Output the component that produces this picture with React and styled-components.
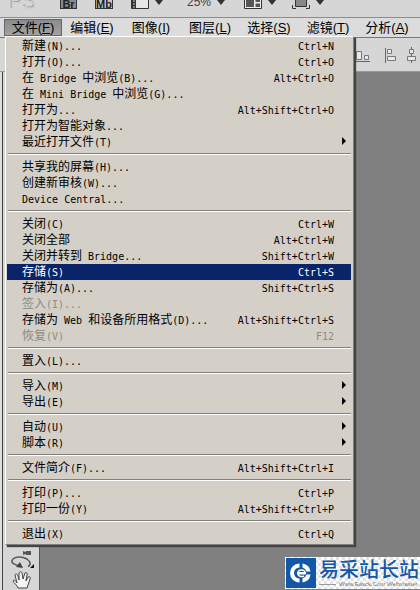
import { Fragment } from 'react';
import styled, { createGlobalStyle } from 'styled-components';

const GlobalStyle = createGlobalStyle`
  * {
    box-sizing: border-box;
  }
  body {
    margin: 0;
    background: #808080;
    font-family: 'Liberation Sans', 'Noto Sans CJK SC', sans-serif;
    color: #000;
  }
  button {
    border: 0;
    padding: 0;
    background: none;
    color: inherit;
    font: inherit;
  }
`;

const menuBar = [
  ['文件', 'F'],
  ['编辑', 'E'],
  ['图像', 'I'],
  ['图层', 'L'],
  ['选择', 'S'],
  ['滤镜', 'T'],
  ['分析', 'A'],
];

const fileMenu = [
  [
    { label: '新建(N)...', keys: 'Ctrl+N' },
    { label: '打开(O)...', keys: 'Ctrl+O' },
    { label: '在 Bridge 中浏览(B)...', keys: 'Alt+Ctrl+O' },
    { label: '在 Mini Bridge 中浏览(G)...' },
    { label: '打开为...', keys: 'Alt+Shift+Ctrl+O' },
    { label: '打开为智能对象...' },
    { label: '最近打开文件(T)', sub: true },
  ],
  [
    { label: '共享我的屏幕(H)...' },
    { label: '创建新审核(W)...' },
    { label: 'Device Central...' },
  ],
  [
    { label: '关闭(C)', keys: 'Ctrl+W' },
    { label: '关闭全部', keys: 'Alt+Ctrl+W' },
    { label: '关闭并转到 Bridge...', keys: 'Shift+Ctrl+W' },
    { label: '存储(S)', keys: 'Ctrl+S', active: true },
    { label: '存储为(A)...', keys: 'Shift+Ctrl+S' },
    { label: '签入(I)...', disabled: true },
    { label: '存储为 Web 和设备所用格式(D)...', keys: 'Alt+Shift+Ctrl+S' },
    { label: '恢复(V)', keys: 'F12', disabled: true },
  ],
  [{ label: '置入(L)...' }],
  [
    { label: '导入(M)', sub: true },
    { label: '导出(E)', sub: true },
  ],
  [
    { label: '自动(U)', sub: true },
    { label: '脚本(R)', sub: true },
  ],
  [{ label: '文件简介(F)...', keys: 'Alt+Shift+Ctrl+I' }],
  [
    { label: '打印(P)...', keys: 'Ctrl+P' },
    { label: '打印一份(Y)', keys: 'Alt+Shift+Ctrl+P' },
  ],
  [{ label: '退出(X)', keys: 'Ctrl+Q' }],
];

const Window = styled.div`
  position: relative;
  display: flex;
  flex-direction: column;
  min-height: 100vh;
  overflow: hidden;
  background: #808080;
`;

const AppBar = styled.header`
  display: flex;
  align-items: flex-start;
  height: 18px;
  padding-left: 10px;
  overflow: hidden;
  background: #d6d6d6;
  border-bottom: 1px solid #8c8c8c;
`;

const Logo = styled.div`
  width: 50px;
  font-size: 20px;
  line-height: 4px;
  color: #d0d0d0;
  text-shadow: -1px -1px 0 #a0a0a0;
`;

const AppButton = styled.button`
  width: ${(props) => (props.$dark ? 17 : 18)}px;
  height: 9px;
  margin-right: 18px;
  border: 1px solid #333;
  border-top: 0;
  background: ${(props) => (props.$dark ? '#8a8a8a' : '#c8c8c8')};
  font-size: 11px;
  font-weight: 700;
  line-height: 4px;
  color: #222;
`;

const ToolButton = styled.button`
  display: flex;
  align-items: flex-start;
  gap: 6px;
  margin-right: 16px;
`;

const Zoom = styled(ToolButton)`
  margin: 0 19px 0 8px;
  font-size: 12px;
  line-height: 4px;
  color: #444;
`;

const MenuBar = styled.nav`
  display: flex;
  gap: 1px;
  height: 19px;
  padding: 1px 0 1px 4px;
  background: #dcdcdc;
  white-space: nowrap;
`;

const MenuTitle = styled.button`
  display: flex;
  flex: none;
  justify-content: center;
  width: 58px;
  border: 1px solid ${(props) => (props.$open ? '#666' : 'transparent')};
  background: ${(props) => (props.$open ? 'linear-gradient(#8b8b8b, #a2a2a2)' : 'none')};
  font-size: 13px;
  line-height: 16px;
`;

const OptionsBar = styled.div`
  display: flex;
  align-items: center;
  justify-content: flex-end;
  gap: 15px;
  height: 35px;
  padding-right: 3px;
  background: #d6d6d6;
  border-top: 1px solid #777;
  border-bottom: 1px solid #999;
`;

const AlignGroup = styled.div`
  display: flex;
  gap: 9px;
`;

const Workspace = styled.main`
  display: flex;
  flex: 1;
`;

const WindowEdge = styled.div`
  width: 3px;
  background: #dedede;
  border-right: 1px solid #444;
`;

const ToolPanel = styled.aside`
  display: flex;
  flex-direction: column;
  justify-content: flex-end;
  gap: 1px;
  width: 37px;
  padding: 0 0 1px 8px;
  background: #d6d6d6;
  border-right: 1px solid #555;
`;

const Menu = styled.div`
  position: absolute;
  top: 36px;
  left: 5px;
  width: 349px;
  padding: 1px 2px 2px 1px;
  border: 1px solid;
  border-color: #fff #808080 #808080 #fff;
  background: #d4d0c8;
  box-shadow: 2px 2px 1px #444;
`;

const Separator = styled.hr`
  height: 2px;
  margin: 3px 0 4px 1px;
  border: 0;
  border-top: 1px solid #808080;
  border-bottom: 1px solid #fff;
`;

const MenuRow = styled.button`
  display: flex;
  align-items: baseline;
  width: 100%;
  height: 16px;
  padding: 0 4px 2px 15px;
  background: ${(props) => (props.$active ? '#0a246a' : 'none')};
  color: ${(props) => (props.$active ? '#fff' : '#000')};
  font-family: 'Noto Sans CJK SC', sans-serif;
  font-size: 12px;
  line-height: 14px;
  white-space: pre;

  &:disabled {
    color: #8d8a84;
  }
`;

const Latin = styled.span`
  font-family: 'DejaVu Sans Mono', monospace;
  font-size: 10px;
  line-height: 10px;
`;

const Keys = styled(Latin)`
  margin-left: auto;
  padding-right: 13px;
`;

const Arrow = styled.svg`
  align-self: center;
  margin-left: auto;
`;

const Watermark = styled.a`
  position: absolute;
  right: 0;
  bottom: 1px;
  display: flex;
  align-items: center;
  gap: 3px;
  width: 135px;
  height: 32px;
  padding-left: 1px;
  overflow: hidden;
  background: repeating-conic-gradient(#e4e4e4 0 25%, #fff 0 50%) 0 0 / 6px 6px;
  color: #1358a8;
  text-decoration: none;
`;

const WatermarkText = styled.div`
  display: flex;
  flex-direction: column;
  white-space: nowrap;
`;

const WatermarkName = styled.div`
  font-family: 'Noto Sans CJK SC', sans-serif;
  font-size: 20px;
  font-weight: 500;
  line-height: 22px;
`;

const WatermarkUrl = styled.div`
  display: flex;
  align-items: center;
  gap: 3px;
  font-size: 6px;
  line-height: 8px;
  color: #777;

  &::before {
    content: '';
    width: 17px;
    height: 1px;
    background: #999;
  }
`;

// Latin runs are set in a half-width face so that two letters fill one han cell
function MenuText({ text }) {
  return (
    <span>
      {text.split(/([\x20-\x7e]+)/).map((part, i) =>
        i % 2 ? <Latin key={i}>{part}</Latin> : <Fragment key={i}>{part}</Fragment>
      )}
    </span>
  );
}

function Caret() {
  return (
    <svg width="8" height="5" viewBox="0 0 8 5" aria-hidden="true">
      <path d="M0 0h8L4 5z" fill="#333" />
    </svg>
  );
}

function LayoutIcon() {
  return (
    <svg width="18" height="9" viewBox="0 0 18 9" aria-hidden="true">
      <path d="M.5-2h17V8.500H.5z" fill="#e6e6e6" stroke="#333" />
      <path d="M1-2h4V8H1z" fill="#333" />
      <path d="M2 1h2M2 4h2M2 7h2" stroke="#ccc" />
    </svg>
  );
}

function ArrangeIcon() {
  return (
    <svg width="18" height="9" viewBox="0 0 18 9" aria-hidden="true">
      <path d="M.5-2h17V8.500H.5z" fill="#eee" stroke="#333" />
      <path d="M2-1h8v8H2zM11.500-1H16v3h-4.500zM11.500 3.500H16V7h-4.500z" fill="#555" />
    </svg>
  );
}

function ScreenIcon() {
  return (
    <svg width="18" height="9" viewBox="0 0 18 9" aria-hidden="true">
      <path d="M3.500-2h11V6.500h-11z" fill="#888" stroke="#333" />
      <path d="M.5 5v3.500H4M17.500 5v3.500H14" fill="none" stroke="#333" />
    </svg>
  );
}

function AlignBottomIcon() {
  return (
    <svg width="15" height="16" viewBox="0 0 15 16" aria-hidden="true">
      <path d="M0 14.500h15" stroke="#666" />
      <path d="M1.500 4.500h5v8h-5zM9.500 8.500h4v4h-4z" fill="#e8e8e8" stroke="#777" />
    </svg>
  );
}

function AlignLeftIcon() {
  return (
    <svg width="12" height="16" viewBox="0 0 12 16" aria-hidden="true">
      <path d="M.5 1v15" stroke="#666" />
      <path d="M2.500 2.500h4v4h-4zM2.500 9.500h8v4h-8z" fill="#e8e8e8" stroke="#777" />
    </svg>
  );
}

function AlignCenterIcon() {
  return (
    <svg width="11" height="16" viewBox="0 0 11 16" aria-hidden="true">
      <path d="M5.500 0v16" stroke="#666" />
      <path d="M3.500 2.500h4v4h-4zM1.500 9.500h8v4h-8z" fill="#e8e8e8" stroke="#777" />
    </svg>
  );
}

function RotateIcon() {
  return (
    <svg width="24" height="24" viewBox="0 0 24 24" aria-hidden="true">
      <path d="M12 5l3 1V5h5v4h-5V8l-3 1z" fill="#555" />
      <path d="M10 20C4 19 0 17 1 14.500 3 10 11 10 16 13c4 3 4 6 1 7.500" fill="none" stroke="#555" strokeWidth="1.500" />
      <path d="M9 16l3 6-7-1z" fill="#444" />
      <path d="M23 18v4h-4z" fill="#111" />
    </svg>
  );
}

function HandIcon() {
  return (
    <svg width="24" height="18" viewBox="0 0 24 18" aria-hidden="true">
      <path
        d="M7 17c-1-3-4-5-5-7 1-2 3 0 4 2L4 4c1-2 2-1 3 1l1 4V2c1-2 3-1 3 0l1 6 2-6c1-1 3 0 2 2l-1 6 2-4c1-1 3 0 2 2l-3 9z"
        fill="#f4f4f4"
        stroke="#444"
      />
    </svg>
  );
}

function WatermarkLogo() {
  return (
    <svg width="30" height="30" viewBox="0 0 30 30" aria-hidden="true">
      <path d="M0 0h30v30H0z" fill="#1358a8" />
      <path d="M13.500 5.500a9.500 9.500 0 0 0 0 19v-4a5.500 5.500 0 0 1 0-11z" fill="#fff" />
      <path d="M16.500 5.500a9.500 9.500 0 0 1 8 8h-4a5.500 5.500 0 0 0-4-4zM16.500 24.500a9.500 9.500 0 0 0 8-8h-4a5.500 5.500 0 0 1-4 4z" fill="#fff" />
      <path d="M11 14h9v2.500h-9z" fill="#fff" />
      <path d="M19 15c0-4-7-4-7 0s4 4 6 3" fill="none" stroke="#fff" strokeWidth="1.500" />
    </svg>
  );
}

export default function App() {
  return (
    <Window>
      <GlobalStyle />
      <AppBar>
        <Logo>PS</Logo>
        <AppButton $dark>Br</AppButton>
        <AppButton>Mb</AppButton>
        <ToolButton aria-label="Layout">
          <LayoutIcon />
          <Caret />
        </ToolButton>
        <Zoom>
          25%
          <Caret />
        </Zoom>
        <ToolButton aria-label="Arrange">
          <ArrangeIcon />
          <Caret />
        </ToolButton>
        <ToolButton aria-label="Screen mode">
          <ScreenIcon />
          <Caret />
        </ToolButton>
      </AppBar>
      <MenuBar>
        {menuBar.map(([name, key], i) => (
          <MenuTitle key={key} $open={i === 0}>
            {name}(<u>{key}</u>)
          </MenuTitle>
        ))}
      </MenuBar>
      <OptionsBar>
        <AlignBottomIcon />
        <AlignGroup>
          <AlignLeftIcon />
          <AlignCenterIcon />
        </AlignGroup>
      </OptionsBar>
      <Workspace>
        <WindowEdge />
        <ToolPanel>
          <RotateIcon />
          <HandIcon />
        </ToolPanel>
      </Workspace>
      <Menu role="menu">
        {fileMenu.map((group, i) => (
          <Fragment key={i}>
            {i > 0 && <Separator />}
            {group.map((item) => (
              <MenuRow key={item.label} role="menuitem" disabled={item.disabled} $active={item.active}>
                <MenuText text={item.label} />
                {item.keys && <Keys>{item.keys}</Keys>}
                {item.sub && (
                  <Arrow width="6" height="8" viewBox="0 0 6 8" aria-hidden="true">
                    <path d="M1 0l4 4-4 4z" />
                  </Arrow>
                )}
              </MenuRow>
            ))}
          </Fragment>
        ))}
      </Menu>
      <Watermark href="#">
        <WatermarkLogo />
        <WatermarkText>
          <WatermarkName>易采站长站</WatermarkName>
          <WatermarkUrl>Www.Easck.Com Webmaster</WatermarkUrl>
        </WatermarkText>
      </Watermark>
    </Window>
  );
}
